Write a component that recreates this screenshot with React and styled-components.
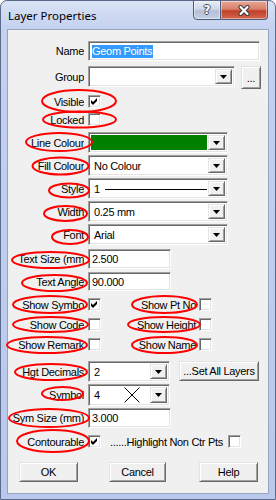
import React from "react";
import styled, { createGlobalStyle, css } from "styled-components";

const GlobalStyle = createGlobalStyle`
  html, body { margin: 0; padding: 0; background: #fff; }
  body { font-family: "Liberation Sans", Arial, sans-serif; }
`;

const sunken = css`
  border: 1px solid;
  border-color: #a0a0a0 #fff #fff #a0a0a0;
  box-shadow: inset 1px 1px 0 #696969, inset -1px -1px 0 #e3e3e3;
`;

const raised = css`
  border: 1px solid;
  border-color: #e3e3e3 #696969 #696969 #e3e3e3;
  box-shadow: inset 1px 1px 0 #fff, inset -1px -1px 0 #a0a0a0;
  background: #f0f0f0;
`;

const Page = styled.div`
  position: relative;
  width: 276px;
  height: 500px;
`;

const Window = styled.div`
  width: 276px;
  height: 500px;
  box-sizing: border-box;
  display: flex;
  flex-direction: column;
  background: linear-gradient(to bottom, #d9e2f5 0px, #c4d1ef 28px, #b9c8ec 100%);
  border: 1px solid #5b6a8a;
  border-radius: 7px 7px 0 0;
  overflow: hidden;
`;

const TitleBar = styled.div`
  height: 28px;
  flex: none;
  display: flex;
  justify-content: space-between;
`;

const Title = styled.div`
  font-family: "Noto Sans", "Open Sans", sans-serif;
  font-size: 11.5px;
  color: #000;
  padding: 7px 0 0 7px;
`;

const CapButtons = styled.div`
  display: flex;
  margin: -1px 7px 0 0;
  align-self: flex-start;
`;

const CapBtn = styled.div`
  width: ${(p) => p.$w}px;
  height: 20px;
  box-sizing: border-box;
  border: 1px solid #4e5c7c;
  display: flex;
  align-items: center;
  justify-content: center;
  box-shadow: inset 0 0 0 1px rgba(255, 255, 255, 0.45);
  ${(p) =>
    p.$close
      ? css`
          border-left: none;
          border-radius: 0 0 4px 0;
          background: linear-gradient(to bottom, #e8a898 0%, #d98069 45%, #c2402a 55%, #d3654b 100%);
        `
      : css`
          border-radius: 0 0 0 4px;
          background: linear-gradient(to bottom, #e8edf6 0%, #cfd8e8 45%, #b4bfd8 55%, #c6d0e4 100%);
        `}
`;

const HelpGlyph = styled.span`
  font-family: "DejaVu Sans", sans-serif;
  font-weight: bold;
  font-size: 12px;
  line-height: 12px;
  color: #fff;
  text-shadow: 1px 0 0 #4a4f5c, -1px 0 0 #4a4f5c, 0 1px 0 #4a4f5c, 0 -1px 0 #4a4f5c;
`;

const Client = styled.div`
  flex: 1;
  margin: 0 6px 5px 6px;
  background: #f0f0f0;
  border: 1px solid #97a3bf;
  display: flex;
  flex-direction: column;
  font-size: 11px;
  letter-spacing: -0.3px;
  color: #000;
`;

const Row = styled.div`
  display: flex;
  align-items: center;
  height: ${(p) => p.$h}px;
  margin-top: ${(p) => p.$mt}px;
  flex: none;
`;

const Label = styled.div`
  width: 76px;
  margin-right: 4px;
  text-align: right;
  white-space: nowrap;
  overflow: hidden;
  flex: none;
`;

const SideLabel = styled.div`
  width: 95px;
  margin-right: 3px;
  text-align: right;
  white-space: nowrap;
  flex: none;
`;

const TextBox = styled.div`
  ${sunken};
  width: ${(p) => p.$w}px;
  height: ${(p) => p.$h || 20}px;
  box-sizing: border-box;
  background: #fff;
  padding-left: 3px;
  display: flex;
  align-items: center;
  flex: none;
`;

const Selected = styled.span`
  background: #3399ff;
  color: #fff;
  line-height: 13px;
  padding: 0 1px 0 0;
`;

const Combo = styled.div`
  ${sunken};
  width: ${(p) => p.$w}px;
  height: ${(p) => p.$h || 21}px;
  box-sizing: border-box;
  background: #fff;
  display: flex;
  align-items: stretch;
  padding: 2px;
  flex: none;
  align-self: flex-start;
`;

const ComboValue = styled.div`
  flex: 1;
  display: flex;
  align-items: center;
  padding-left: 3px;
  margin-right: 1px;
  background: ${(p) => p.$fill || "transparent"};
`;

const DropBtn = styled.div`
  ${raised};
  width: 17px;
  box-sizing: border-box;
  display: flex;
  align-items: center;
  justify-content: center;
`;

const StyleLine = styled.div`
  flex: 1;
  height: 1px;
  background: #000;
  margin: 1px 0 0 5px;
`;

const SymbolMark = styled.svg`
  margin-left: 24px;
`;

const CheckBox = styled.div`
  ${sunken};
  width: 13px;
  height: 13px;
  box-sizing: border-box;
  background: #fff;
  flex: none;
  display: flex;
  align-items: center;
  justify-content: center;
  margin-left: ${(p) => p.$ml || 0}px;
`;

const PushButton = styled.div`
  ${raised};
  width: ${(p) => p.$w}px;
  height: ${(p) => p.$h || 20}px;
  box-sizing: border-box;
  display: flex;
  align-items: center;
  justify-content: center;
  margin-left: ${(p) => p.$ml || 0}px;
  flex: none;
  align-self: flex-start;
`;

const Note = styled.div`
  margin-left: 9px;
  white-space: nowrap;
`;

const Marks = styled.svg`
  position: absolute;
  left: 0;
  top: 0;
  pointer-events: none;
`;

const rings = [
  [79, 101, 37, 11],
  [79.5, 119.5, 36.5, 8],
  [59, 142, 33, 9],
  [60.5, 166, 28, 8.5],
  [69, 190.5, 20, 7],
  [65.5, 213.5, 21.5, 7.5],
  [70, 237, 18, 7],
  [50.5, 260, 38.5, 8],
  [54.5, 283, 32.5, 8],
  [50, 304.5, 37, 8.5],
  [164.5, 304.5, 32.5, 8.5],
  [50.5, 324.5, 37.5, 7.5],
  [164, 324.5, 36, 7.5],
  [47, 345, 40, 8],
  [164.5, 345, 32.5, 8],
  [51, 372, 36, 8],
  [62.5, 393.5, 20.5, 6.5],
  [49, 418, 40, 9],
  [53, 441, 36, 11],
];

function Arrow() {
  return (
    <svg width="7" height="4" viewBox="0 0 7 4">
      <polygon points="0,0 7,0 3.5,4" fill="#000" />
    </svg>
  );
}

function Check() {
  return (
    <svg width="7" height="7" viewBox="0 0 7 7">
      <polygon points="0,2 2,4 6,0 6,3 2,7 0,5" fill="#000" />
    </svg>
  );
}

function CloseIcon() {
  return (
    <svg width="12" height="11" viewBox="0 0 12 11">
      <path d="M2.5 2 L9.5 9 M9.5 2 L2.5 9" stroke="#3b3b3b" strokeWidth="4.2" strokeLinecap="round" />
      <path d="M2.5 2 L9.5 9 M9.5 2 L2.5 9" stroke="#fff" strokeWidth="2.2" strokeLinecap="round" />
    </svg>
  );
}

function DropCombo({ w, h, fill, children }) {
  return (
    <Combo $w={w} $h={h}>
      <ComboValue $fill={fill}>{children}</ComboValue>
      <DropBtn>
        <Arrow />
      </DropBtn>
    </Combo>
  );
}

export default function App() {
  return (
    <>
      <GlobalStyle />
      <Page>
        <Window>
          <TitleBar>
            <Title>Layer Properties</Title>
            <CapButtons>
              <CapBtn $w={28}>
                <HelpGlyph>?</HelpGlyph>
              </CapBtn>
              <CapBtn $w={47} $close>
                <CloseIcon />
              </CapBtn>
            </CapButtons>
          </TitleBar>
          <Client>
            <Row $mt={11} $h={20}>
              <Label>Name</Label>
              <TextBox $w={172}>
                <Selected>Geom Points</Selected>
              </TextBox>
            </Row>
            <Row $mt={5} $h={21}>
              <Label>Group</Label>
              <DropCombo w={147} />
              <PushButton $w={20} $h={23} $ml={6}>...</PushButton>
            </Row>
            <Row $mt={7} $h={15}>
              <Label>Visible</Label>
              <CheckBox>
                <Check />
              </CheckBox>
            </Row>
            <Row $mt={3} $h={15}>
              <Label>Locked</Label>
              <CheckBox />
            </Row>
            <Row $mt={5} $h={21}>
              <Label>Line Colour</Label>
              <DropCombo w={140} fill="#008000" />
            </Row>
            <Row $mt={2} $h={21}>
              <Label>Fill Colour</Label>
              <DropCombo w={140}>No Colour</DropCombo>
            </Row>
            <Row $mt={2} $h={21}>
              <Label>Style</Label>
              <DropCombo w={140}>
                1<StyleLine />
              </DropCombo>
            </Row>
            <Row $mt={2} $h={21}>
              <Label>Width</Label>
              <DropCombo w={140}>0.25 mm</DropCombo>
            </Row>
            <Row $mt={2} $h={21}>
              <Label>Font</Label>
              <DropCombo w={140}>Arial</DropCombo>
            </Row>
            <Row $mt={4} $h={20}>
              <Label>Text Size (mm</Label>
              <TextBox $w={83}>2.500</TextBox>
            </Row>
            <Row $mt={3} $h={19}>
              <Label>Text Angle</Label>
              <TextBox $w={83} $h={19}>90.000</TextBox>
            </Row>
            <Row $mt={6} $h={15}>
              <Label>Show Symbo</Label>
              <CheckBox>
                <Check />
              </CheckBox>
              <SideLabel>Show Pt No</SideLabel>
              <CheckBox />
            </Row>
            <Row $mt={5} $h={15}>
              <Label>Show Code</Label>
              <CheckBox />
              <SideLabel>Show Height</SideLabel>
              <CheckBox />
            </Row>
            <Row $mt={5} $h={15}>
              <Label>Show Remark</Label>
              <CheckBox />
              <SideLabel>Show Name</SideLabel>
              <CheckBox />
            </Row>
            <Row $mt={9} $h={21}>
              <Label>Hgt Decimals</Label>
              <DropCombo w={82}>2</DropCombo>
              <PushButton $w={80} $ml={9}>...Set All Layers</PushButton>
            </Row>
            <Row $mt={2} $h={22}>
              <Label>Symbol</Label>
              <DropCombo w={82} h={22}>
                4
                <SymbolMark width="16" height="16" viewBox="0 0 16 16">
                  <path d="M0.5 0.5 L15.5 15.5 M15.5 0.5 L0.5 15.5" stroke="#000" strokeWidth="1" />
                </SymbolMark>
              </DropCombo>
            </Row>
            <Row $mt={2} $h={20}>
              <Label>Sym Size (mm)</Label>
              <TextBox $w={83}>3.000</TextBox>
            </Row>
            <Row $mt={6} $h={15}>
              <Label>Contourable</Label>
              <CheckBox>
                <Check />
              </CheckBox>
              <Note>......Highlight Non Ctr Pts</Note>
              <CheckBox $ml={5} />
            </Row>
            <Row $mt={13} $h={20}>
              <PushButton $w={59} $ml={11}>OK</PushButton>
              <PushButton $w={57} $ml={31}>Cancel</PushButton>
              <PushButton $w={59} $ml={33}>Help</PushButton>
            </Row>
          </Client>
        </Window>
        <Marks width="276" height="500" viewBox="0 0 276 500">
          {rings.map(([cx, cy, rx, ry], i) => (
            <ellipse key={i} cx={cx} cy={cy} rx={rx} ry={ry} fill="none" stroke="#ff0000" strokeWidth="2" />
          ))}
        </Marks>
      </Page>
    </>
  );
}
